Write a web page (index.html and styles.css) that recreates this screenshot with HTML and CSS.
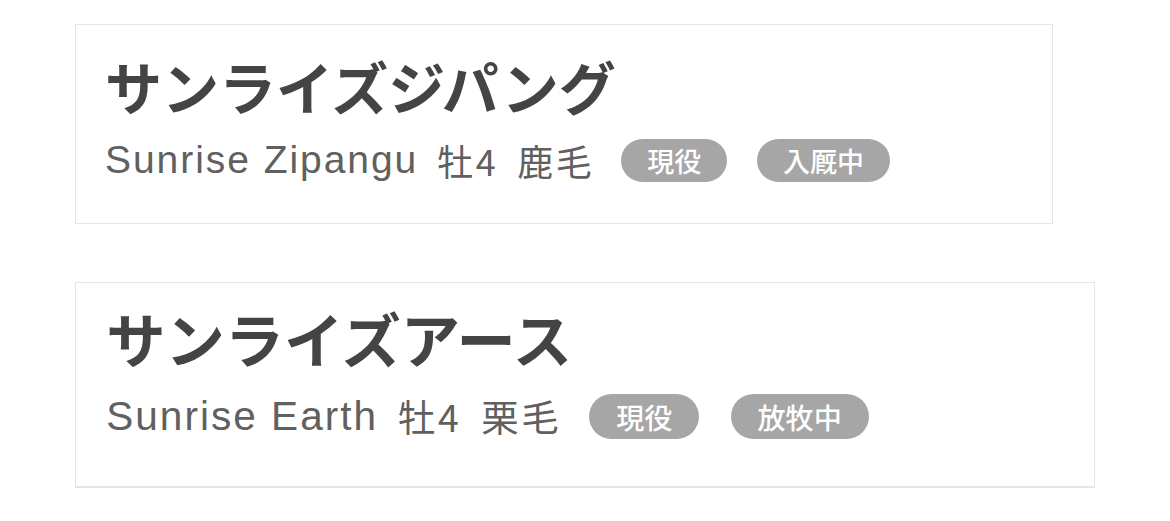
FILE: index.html
```html
<!DOCTYPE html>
<html lang="ja">
<head>
    <meta charset="UTF-8">
    <meta name="viewport" content="width=device-width, initial-scale=1.0">
    <title>Horses</title>
    <link rel="stylesheet" href="styles.css">
</head>
<body>
    <div class="list">
        <!-- Horse card -->
        <div class="card">
            <h2 class="card-title">サンライズジパング</h2>
            <div class="card-meta">
                <span class="name-en">Sunrise Zipangu</span>
                <span class="meta-ja">牡4</span>
                <span class="meta-ja">鹿毛</span>
                <span class="tags">
                    <span class="tag">現役</span>
                    <span class="tag">入厩中</span>
                </span>
            </div>
        </div>

        <div class="card card--large">
            <h2 class="card-title">サンライズアース</h2>
            <div class="card-meta">
                <span class="name-en">Sunrise Earth</span>
                <span class="meta-ja">牡4</span>
                <span class="meta-ja">栗毛</span>
                <span class="tags">
                    <span class="tag">現役</span>
                    <span class="tag">放牧中</span>
                </span>
            </div>
        </div>
    </div>
</body>
</html>
```

FILE: styles.css
```css
body {
    margin: 0;
    background-color: #ffffff;
    font-family: "Liberation Sans", "Noto Sans CJK JP", sans-serif;
}

.list {
    display: flex;
    flex-direction: column;
    align-items: flex-start;
    gap: 58px;
    padding: 24px 75px;
}

/* sizes are in em so the second card can be scaled up a little */
.card {
    font-size: 10px;
    width: 97.8em;
    box-sizing: border-box;
    padding: 2.6em 2.9em 4.1em;
    background: #ffffff;
    border: 1px solid #e6e6e6;
}

.card--large {
    font-size: 10.4px;
    width: 98.1em;
    padding-top: 1.8em;
    padding-bottom: 4.5em;
    border-bottom-width: 2px;
}

.card-title {
    margin: 0;
    font-family: "Noto Sans CJK JP", sans-serif;
    font-size: 5.7em;
    font-weight: 700;
    line-height: 1.2;
    color: #444444;
}

.card-meta {
    display: flex;
    align-items: center;
    gap: 1.9em;
    height: 4.3em;
    margin-top: 2em;
    color: #606060;
    white-space: nowrap;
}

.name-en {
    font-size: 3.9em;
    line-height: 1.1;
    letter-spacing: 0.05em;
}

.meta-ja {
    font-family: "Noto Sans CJK JP", sans-serif;
    font-size: 3.6em;
    line-height: 1.2;
    letter-spacing: 0.07em;
}

.tags {
    display: flex;
    gap: 3em;
    margin-left: 0.8em;
}

.tag {
    display: inline-flex;
    align-items: center;
    height: 1.6em;
    padding: 0 0.96em;
    border-radius: 999px;
    background-color: #a6a6a6;
    color: #ffffff;
    font-family: "Noto Sans CJK JP", sans-serif;
    font-size: 2.7em;
    font-weight: 500;
}
```
